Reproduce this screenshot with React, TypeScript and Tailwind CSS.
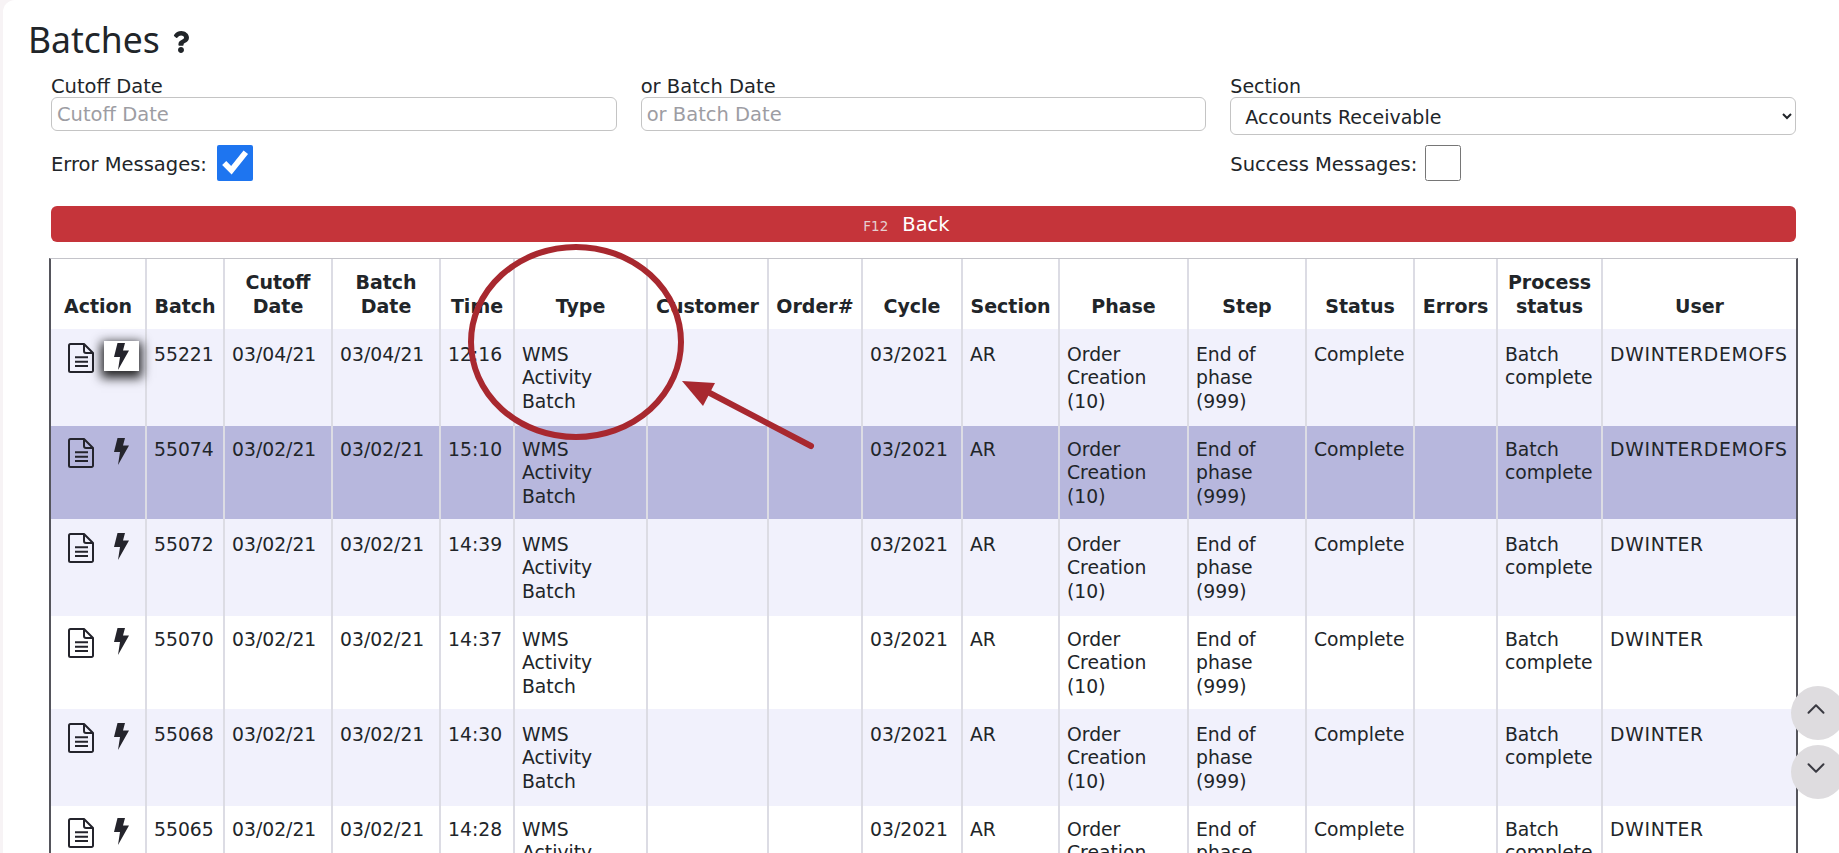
import React from 'react';
import { FaQuestion } from 'react-icons/fa';
import { ChevronDown, ChevronUp } from 'lucide-react';

interface BatchRow {
  batch: string;
  date: string;
  time: string;
  user: string;
}

const COLUMNS = [
  { label: 'Action', col: 'w-[96px]' },
  { label: 'Batch', col: 'w-[78px]' },
  { label: 'Cutoff\nDate', col: 'w-[108px]' },
  { label: 'Batch\nDate', col: 'w-[108px]' },
  { label: 'Time', col: 'w-[74px]' },
  { label: 'Type', col: 'w-[133px]' },
  { label: 'Customer', col: 'w-[121px]' },
  { label: 'Order#', col: 'w-[94px]' },
  { label: 'Cycle', col: 'w-[100px]' },
  { label: 'Section', col: 'w-[97px]' },
  { label: 'Phase', col: 'w-[129px]' },
  { label: 'Step', col: 'w-[118px]' },
  { label: 'Status', col: 'w-[108px]' },
  { label: 'Errors', col: 'w-[83px]' },
  { label: 'Process\nstatus', col: 'w-[105px]' },
  { label: 'User', col: 'w-[193px]' },
];

const ROWS: BatchRow[] = [
  { batch: '55221', date: '03/04/21', time: '12:16', user: 'DWINTERDEMOFS' },
  { batch: '55074', date: '03/02/21', time: '15:10', user: 'DWINTERDEMOFS' },
  { batch: '55072', date: '03/02/21', time: '14:39', user: 'DWINTER' },
  { batch: '55070', date: '03/02/21', time: '14:37', user: 'DWINTER' },
  { batch: '55068', date: '03/02/21', time: '14:30', user: 'DWINTER' },
  { batch: '55065', date: '03/02/21', time: '14:28', user: 'DWINTER' },
];

const DocIcon = () => (
  <svg width="26" height="30" viewBox="0 0 26 30" fill="none" stroke="#24242c" strokeWidth="2" className="mt-[2px] shrink-0">
    <path d="M2.5 1H16L25 10V27.5a1.5 1.5 0 0 1-1.5 1.5h-21A1.5 1.5 0 0 1 1 27.5V2.5A1.5 1.5 0 0 1 2.5 1Z" strokeLinejoin="round" />
    <path d="M16 1V8a2 2 0 0 0 2 2H25" />
    <path d="M7 14.3H20M7 18.7H20M7 23H20" />
  </svg>
);

const BoltIcon = () => (
  <svg width="15" height="27" viewBox="0 0 15 27" fill="#24242c">
    <polygon points="3.5,0 11,0 9,7.5 15,7.5 4,27 6,14 0,14" />
  </svg>
);

const Td = ({ pad, className = '', children }: { pad: string; className?: string; children?: React.ReactNode }) => (
  <td className={`${pad} ${className} pl-[7px] pr-1 align-top border-r-2 border-[#dcdce4] last:border-r-0 whitespace-pre-line`}>
    {children}
  </td>
);

const App: React.FC = () => {
  return (
    <div className="relative h-[853px] w-[1839px] overflow-hidden bg-[#f7f3f5] pl-[3px] text-[#212529] [font-family:'DejaVu_Sans',sans-serif]">
      <div className="h-full rounded-tl-xl bg-white">
        <div className="h-[73px] pl-[25px] pt-[5px] flex items-center gap-[10px]">
          <h1 className="text-[35.5px] leading-[48px] [font-family:'Noto_Sans',sans-serif]">Batches</h1>
          <FaQuestion size={22} className="mt-[6px]" />
        </div>

        <div className="pl-[48px] pr-[43px] text-[19.5px] leading-[24px]">
          <div className="grid grid-cols-3 gap-x-6">
            <div>
              <label className="block h-[24px] leading-[28px]">Cutoff Date</label>
              <input
                placeholder="Cutoff Date"
                className="block w-full h-[34px] rounded-[6px] border border-[#c4c4c4] pl-[5px] pt-[1px] placeholder:text-[#9d9da3] outline-none"
              />
            </div>
            <div>
              <label className="block h-[24px] leading-[28px]">or Batch Date</label>
              <input
                placeholder="or Batch Date"
                className="block w-full h-[34px] rounded-[6px] border border-[#c4c4c4] pl-[5px] pt-[1px] placeholder:text-[#9d9da3] outline-none"
              />
            </div>
            <div>
              <label className="block h-[24px] leading-[26px] text-[19px]">Section</label>
              <select className="block w-full h-[38px] rounded-[6px] border border-[#c4c4c4] bg-white pl-[10px] pt-[2px] text-[19px] outline-none">
                <option>Accounts Receivable</option>
              </select>
            </div>
          </div>

          <div className="grid grid-cols-3 gap-x-6 h-[36px] mt-[10px]">
            <div className="flex items-center gap-[10px]">
              <span className="pt-[4px]">Error Messages:</span>
              <input type="checkbox" defaultChecked className="w-[36px] h-[36px] accent-[#1e75f0]" />
            </div>
            <div />
            <div className="flex items-center gap-[8px]">
              <span className="pt-[4px]">Success Messages:</span>
              <input type="checkbox" className="w-[36px] h-[36px]" />
            </div>
          </div>

          <button className="mt-[25px] flex h-[36px] w-full items-center justify-center gap-[14px] rounded-[6px] bg-[#c5343a] pr-[34px] pt-[1px] text-white">
            <span className="pt-[2px] text-[13.5px] text-[#e6cfd0]">F12</span>
            <span>Back</span>
          </button>

          <div className="mt-[16px] -mx-[2px] border-t border-x-2 border-t-[#c4c4ca] border-x-[#55555c]">
            <table className="w-full table-fixed border-separate border-spacing-0 text-[18.77px] leading-[23.4px]">
              <colgroup>
                {COLUMNS.map((c) => (
                  <col key={c.label} className={c.col} />
                ))}
              </colgroup>
              <thead>
                <tr className="h-[70px]">
                  {COLUMNS.map((c) => (
                    <th
                      key={c.label}
                      className="px-0 pb-[11px] align-bottom text-center text-[19px] font-bold whitespace-pre-line border-r-2 border-[#dcdce4] last:border-r-0"
                    >
                      {c.label}
                    </th>
                  ))}
                </tr>
              </thead>
              <tbody>
                {ROWS.map((row, i) => {
                  const odd = i % 2 === 0;
                  const pad = odd ? 'pt-[14px]' : 'pt-[12px]';
                  const iconPad = odd ? 'pt-[12px]' : 'pt-[10px]';
                  const bg = i === 1 ? 'bg-[#b7b7dd]' : odd ? 'bg-[#f1f1fc]' : 'bg-white';
                  return (
                    <tr key={row.batch} className={`${bg} ${odd ? 'h-[97px]' : 'h-[93px]'}`}>
                      <td className={`${iconPad} pl-[17px] align-top border-r-2 border-[#dcdce4]`}>
                        <div className="flex items-start gap-[10px]">
                          <DocIcon />
                          <div
                            className={`flex h-[30px] w-[35px] shrink-0 items-center justify-center ${
                              i === 0 ? 'bg-white shadow-[0_4px_10px_3px_rgba(0,0,0,0.85)]' : ''
                            }`}
                          >
                            <BoltIcon />
                          </div>
                        </div>
                      </td>
                      <Td pad={pad}>{row.batch}</Td>
                      <Td pad={pad}>{row.date}</Td>
                      <Td pad={pad}>{row.date}</Td>
                      <Td pad={pad}>{row.time}</Td>
                      <Td pad={pad}>{'WMS\nActivity\nBatch'}</Td>
                      <Td pad={pad} />
                      <Td pad={pad} />
                      <Td pad={pad}>03/2021</Td>
                      <Td pad={pad}>AR</Td>
                      <Td pad={pad}>{'Order\nCreation\n(10)'}</Td>
                      <Td pad={pad}>{'End of\nphase\n(999)'}</Td>
                      <Td pad={pad}>Complete</Td>
                      <Td pad={pad} />
                      <Td pad={pad}>{'Batch\ncomplete'}</Td>
                      <Td pad={pad} className="tracking-[0.7px]">{row.user}</Td>
                    </tr>
                  );
                })}
              </tbody>
            </table>
          </div>
        </div>
      </div>

      {/* Annotation over the table */}
      <svg className="absolute left-0 top-0 pointer-events-none" width="1839" height="853" viewBox="0 0 1839 853">
        <ellipse cx="576" cy="342" rx="105" ry="95" fill="none" stroke="#a8282f" strokeWidth="6" />
        <line x1="811" y1="446" x2="706" y2="391" stroke="#a8282f" strokeWidth="6" strokeLinecap="round" />
        <polygon points="682,381 715,383 703,406" fill="#a8282f" />
      </svg>

      {/* Scroll buttons */}
      <button className="absolute left-[1791px] top-[686px] flex h-[54px] w-[54px] items-center justify-center rounded-full bg-[#dedcdf] pr-[4px] pb-[8px] text-[#3a3a42]">
        <ChevronUp size={30} strokeWidth={1.6} />
      </button>
      <button className="absolute left-[1791px] top-[745px] flex h-[54px] w-[54px] items-center justify-center rounded-full bg-[#dedcdf] pr-[4px] pb-[8px] text-[#3a3a42]">
        <ChevronDown size={30} strokeWidth={1.6} />
      </button>
    </div>
  );
};

export default App;
